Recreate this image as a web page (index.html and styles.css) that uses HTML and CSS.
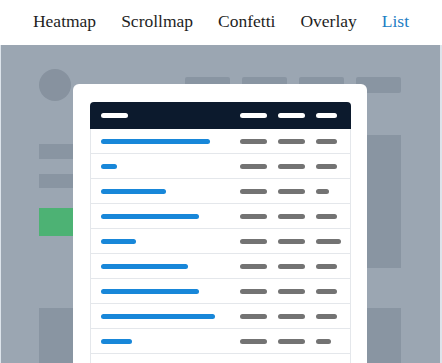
FILE: index.html
```html
<!DOCTYPE html>
<html lang="en">
<head>
    <meta charset="UTF-8">
    <meta name="viewport" content="width=device-width, initial-scale=1.0">
    <title>List view</title>
    <link rel="stylesheet" href="styles.css">
</head>
<body>
    <nav class="tabs">
        <a class="tab">Heatmap</a>
        <a class="tab">Scrollmap</a>
        <a class="tab">Confetti</a>
        <a class="tab">Overlay</a>
        <a class="tab active">List</a>
    </nav>
    <div class="stage">
        <div class="sk-top">
            <div class="sk-avatar"></div>
            <div class="sk-menu">
                <span></span><span></span><span></span><span></span>
            </div>
        </div>
        <div class="sk-layout">
            <div class="sk-side">
                <div class="sk-line"></div>
                <div class="sk-line short"></div>
                <div class="sk-green"></div>
                <div class="sk-box"></div>
            </div>
            <div class="sk-aside">
                <div class="sk-col tall"></div>
                <div class="sk-col"></div>
            </div>
        </div>

        <div class="card">
            <div class="table">
                <div class="thead">
                    <span class="bar light" style="width:27px"></span>
                    <span class="bar light"></span>
                    <span class="bar light"></span>
                    <span class="bar light" style="width:21px"></span>
                </div>
                <div class="row">
                    <span class="bar blue" style="width:109px"></span>
                    <span class="bar grey"></span><span class="bar grey"></span><span class="bar grey" style="width:21px"></span>
                </div>
                <div class="row">
                    <span class="bar blue" style="width:16px"></span>
                    <span class="bar grey"></span><span class="bar grey"></span><span class="bar grey" style="width:21px"></span>
                </div>
                <div class="row">
                    <span class="bar blue" style="width:65px"></span>
                    <span class="bar grey"></span><span class="bar grey"></span><span class="bar grey" style="width:13px"></span>
                </div>
                <div class="row">
                    <span class="bar blue" style="width:98px"></span>
                    <span class="bar grey"></span><span class="bar grey"></span><span class="bar grey" style="width:21px"></span>
                </div>
                <div class="row">
                    <span class="bar blue" style="width:35px"></span>
                    <span class="bar grey"></span><span class="bar grey"></span><span class="bar grey" style="width:25px"></span>
                </div>
                <div class="row">
                    <span class="bar blue" style="width:87px"></span>
                    <span class="bar grey"></span><span class="bar grey"></span><span class="bar grey" style="width:21px"></span>
                </div>
                <div class="row">
                    <span class="bar blue" style="width:98px"></span>
                    <span class="bar grey"></span><span class="bar grey"></span><span class="bar grey" style="width:21px"></span>
                </div>
                <div class="row">
                    <span class="bar blue" style="width:114px"></span>
                    <span class="bar grey"></span><span class="bar grey"></span><span class="bar grey" style="width:21px"></span>
                </div>
                <div class="row">
                    <span class="bar blue" style="width:31px"></span>
                    <span class="bar grey"></span><span class="bar grey"></span><span class="bar grey" style="width:15px"></span>
                </div>
                <div class="row">
                    <span class="bar blue" style="width:72px"></span>
                    <span class="bar grey"></span><span class="bar grey"></span><span class="bar grey" style="width:21px"></span>
                </div>
            </div>
        </div>
    </div>
</body>
</html>
```

FILE: styles.css
```css
body{
    margin: 0;
    height: 363px;
    overflow: hidden;
    background-color: white;
    font-family: "Liberation Serif", "Times New Roman", serif;
}
.tabs{
    display: flex;
    justify-content: center;
    align-items: center;
    gap: 25px;
    height: 43px;
    padding-bottom: 2px;
    background-color: white;
    font-size: 17.5px;
}
.tab{
    color: rgb(30, 30, 30);
}
.tab.active{
    color: rgb(28, 125, 196);
}
.stage{
    position: relative;
    height: 294px;
    padding: 24px 39px 0 38px;
    background-color: rgb(155, 166, 178);
    border-left: 1px solid rgb(221, 228, 235);
    border-right: 2px solid rgb(221, 228, 235);
    overflow: hidden;
}
.sk-top{
    display: flex;
    justify-content: space-between;
    align-items: center;
}
.sk-avatar{
    width: 32px;
    height: 32px;
    border-radius: 50%;
    background-color: rgb(135, 146, 159);
}
.sk-menu{
    display: flex;
    gap: 12px;
}
.sk-menu span{
    width: 45px;
    height: 16px;
    border-radius: 2px;
    background-color: rgb(137, 149, 162);
}
.sk-layout{
    display: flex;
    justify-content: space-between;
    margin-top: 34px;
}
.sk-side{
    display: flex;
    flex-direction: column;
    width: 100px;
    padding-top: 9px;
}
.sk-line{
    height: 15px;
    background-color: rgb(137, 149, 162);
}
.sk-line.short{
    height: 14px;
    margin-top: 15px;
}
.sk-green{
    height: 28px;
    margin-top: 20px;
    background-color: rgb(77, 178, 116);
}
.sk-box{
    height: 80px;
    margin-top: 72px;
    background-color: rgb(137, 149, 162);
}
.sk-aside{
    display: flex;
    flex-direction: column;
    gap: 40px;
    width: 34px;
}
.sk-col{
    height: 80px;
    background-color: rgb(137, 149, 162);
}
.sk-col.tall{
    height: 133px;
}
.card{
    position: absolute;
    left: 72px;
    top: 39px;
    width: 261px;
    height: 300px;
    padding: 18px 16px 0 17px;
    background-color: white;
    border-radius: 6px;
}
.thead, .row{
    display: grid;
    grid-template-columns: 1fr 27px 27px 25px;
    column-gap: 11px;
    align-items: center;
}
.thead{
    height: 27px;
    padding: 0 10px 0 11px;
    background-color: rgb(12, 26, 45);
    border-radius: 4px 4px 0 0;
}
.row{
    height: 24px;
    padding: 0 9px 0 10px;
    border-left: 1px solid rgb(228, 231, 235);
    border-right: 1px solid rgb(228, 231, 235);
    border-bottom: 1px solid rgb(228, 231, 235);
}
.bar{
    display: block;
    width: 27px;
    height: 5px;
    border-radius: 3px;
}
.bar.light{
    background-color: white;
}
.bar.blue{
    background-color: rgb(24, 135, 217);
}
.bar.grey{
    background-color: rgb(115, 115, 115);
}
```
